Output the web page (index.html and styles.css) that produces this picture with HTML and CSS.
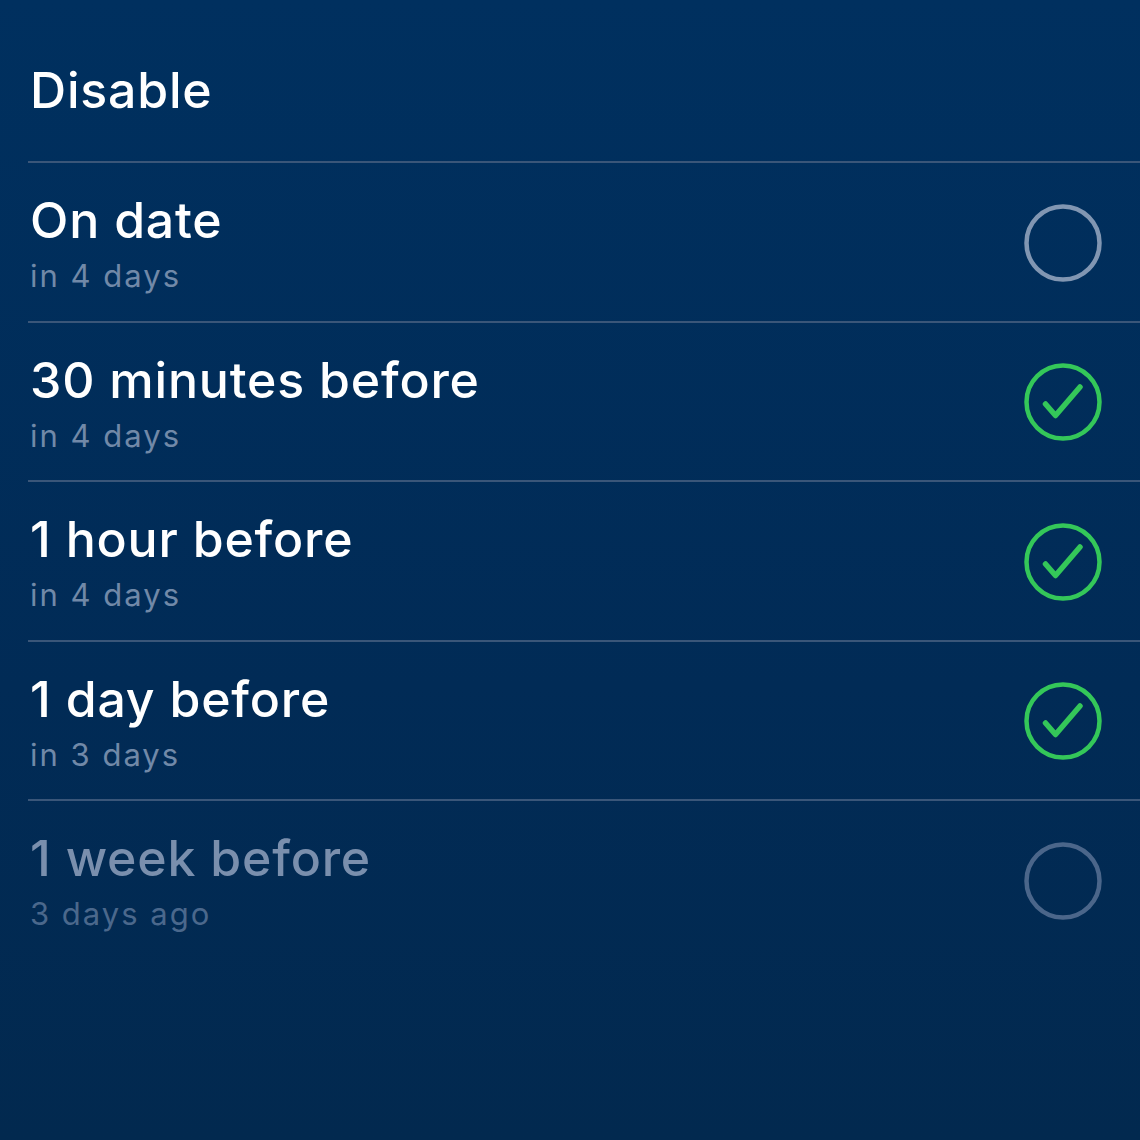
FILE: index.html
```html
<!DOCTYPE html>
<html lang="en">
<head>
<meta charset="utf-8">
<title>Reminders</title>
<link rel="stylesheet" href="styles.css">
</head>
<body>
<div class="screen">
  <ul class="list">
    <li class="row row-disable">
      <div class="text"><div class="title">Disable</div></div>
    </li>
    <li class="row">
      <div class="text">
        <div class="title">On date</div>
        <div class="sub">in 4 days</div>
      </div>
      <svg class="mark" viewBox="0 0 78 78" width="78" height="78"><circle class="ring ring-off" cx="39" cy="39" r="36.5"/></svg>
    </li>
    <li class="row">
      <div class="text">
        <div class="title">30 minutes before</div>
        <div class="sub">in 4 days</div>
      </div>
      <svg class="mark" viewBox="0 0 78 78" width="78" height="78"><circle class="ring ring-on" cx="39" cy="39" r="36.5"/><path class="tick" d="M21.5 41 L31.5 52.5 L56 24"/></svg>
    </li>
    <li class="row">
      <div class="text">
        <div class="title">1 hour before</div>
        <div class="sub">in 4 days</div>
      </div>
      <svg class="mark" viewBox="0 0 78 78" width="78" height="78"><circle class="ring ring-on" cx="39" cy="39" r="36.5"/><path class="tick" d="M21.5 41 L31.5 52.5 L56 24"/></svg>
    </li>
    <li class="row">
      <div class="text">
        <div class="title">1 day before</div>
        <div class="sub">in 3 days</div>
      </div>
      <svg class="mark" viewBox="0 0 78 78" width="78" height="78"><circle class="ring ring-on" cx="39" cy="39" r="36.5"/><path class="tick" d="M21.5 41 L31.5 52.5 L56 24"/></svg>
    </li>
    <li class="row row-past">
      <div class="text">
        <div class="title">1 week before</div>
        <div class="sub">3 days ago</div>
      </div>
      <svg class="mark" viewBox="0 0 78 78" width="78" height="78"><circle class="ring ring-past" cx="39" cy="39" r="36.5"/></svg>
    </li>
  </ul>
</div>
</body>
</html>
```

FILE: styles.css
```css
html, body {
  margin: 0;
  padding: 0;
}
body {
  width: 1140px;
  height: 1140px;
  overflow: hidden;
  background: linear-gradient(180deg, #00305f 0%, #012b56 60%, #02294f 100%);
  font-family: Inter, "Noto Sans", "Liberation Sans", sans-serif;
  -webkit-font-smoothing: antialiased;
}
.screen {
  width: 1140px;
  height: 1140px;
}
.list {
  list-style: none;
  margin: 0 0 0 28px;
  padding: 0;
}
.row {
  display: flex;
  align-items: flex-start;
  justify-content: space-between;
  height: 157.5px;
  border-top: 2px solid #3a5679;
  padding: 0 38px 0 2px;
  box-sizing: content-box;
}
.row-disable {
  border-top: none;
  height: 161px;
  box-sizing: border-box;
  padding-top: 58px;
}
.text {
  display: flex;
  flex-direction: column;
  padding-top: 25px;
}
.row-disable .text {
  padding-top: 0;
}
.title {
  color: #ffffff;
  font-size: 50px;
  line-height: 64px;
  font-weight: 500;
  letter-spacing: 0.8px;
}
.sub {
  color: #7189a8;
  font-size: 31px;
  line-height: 48px;
  font-weight: 400;
  letter-spacing: 2px;
}
.row-past .title {
  color: #7a8fad;
}
.row-past .sub {
  color: #4b688c;
}
.mark {
  align-self: center;
  flex: none;
  margin-top: 2px;
}
.ring {
  fill: none;
  stroke-width: 4.5;
}
.ring-off {
  stroke: #8196b2;
}
.ring-on {
  stroke: #34c759;
}
.ring-past {
  stroke: #4b668a;
}
.tick {
  fill: none;
  stroke: #34c759;
  stroke-width: 5.5;
  stroke-linecap: round;
  stroke-linejoin: round;
}
```
